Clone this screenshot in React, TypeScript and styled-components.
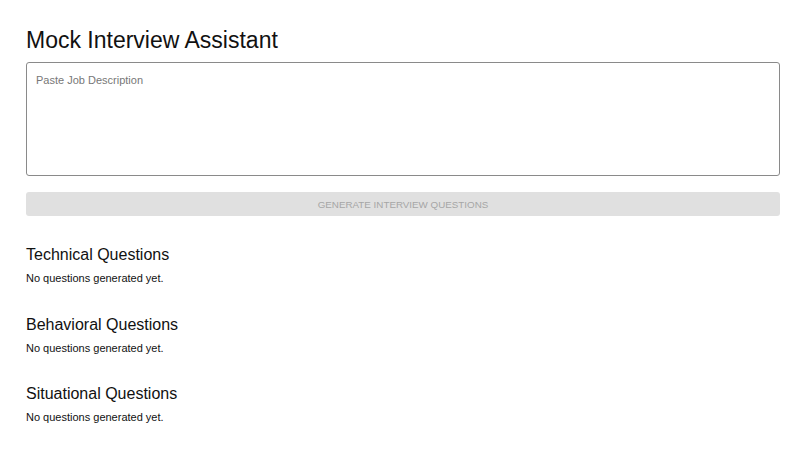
import React from 'react';
import styled, { createGlobalStyle } from 'styled-components';

const GlobalStyle = createGlobalStyle`
  body {
    margin: 0;
    background: #ffffff;
    font-family: "Liberation Sans", Arial, sans-serif;
    color: #111111;
  }
`;

const Page = styled.div`
  padding: 26px 26px 20px;
  display: flex;
  flex-direction: column;
`;

const Title = styled.h1`
  margin: 0 0 8px;
  font-size: 23px;
  font-weight: 400;
  line-height: 28px;
`;

const JobInput = styled.textarea`
  box-sizing: border-box;
  width: 100%;
  height: 114px;
  margin: 0;
  padding: 11px 9px;
  border: 1px solid #8a8a8a;
  border-radius: 3px;
  resize: none;
  font-family: inherit;
  font-size: 11px;
  color: #222;

  &::placeholder {
    color: #777777;
    opacity: 1;
  }
`;

const GenerateButton = styled.button`
  margin-top: 16px;
  height: 24px;
  border: none;
  border-radius: 3px;
  background: #e0e0e0;
  color: #a6a6a6;
  font-family: inherit;
  font-size: 9.8px;
  text-transform: uppercase;
`;

const Sections = styled.div`
  margin-top: 29px;
  display: flex;
  flex-direction: column;
  gap: 29.5px;
`;

const Section = styled.section`
  display: flex;
  flex-direction: column;
  gap: 6px;
`;

const SectionTitle = styled.h2`
  margin: 0;
  font-size: 16px;
  font-weight: 400;
  line-height: 20px;
`;

const Empty = styled.p`
  margin: 0;
  font-size: 11px;
  line-height: 14px;
`;

const categories = ['Technical', 'Behavioral', 'Situational'];

export default function App() {
  return (
    <>
      <GlobalStyle />
      <Page>
        <Title>Mock Interview Assistant</Title>
        <JobInput placeholder="Paste Job Description" />
        <GenerateButton disabled>Generate Interview Questions</GenerateButton>
        <Sections>
          {categories.map((c) => (
            <Section key={c}>
              <SectionTitle>{c} Questions</SectionTitle>
              <Empty>No questions generated yet.</Empty>
            </Section>
          ))}
        </Sections>
      </Page>
    </>
  );
}
